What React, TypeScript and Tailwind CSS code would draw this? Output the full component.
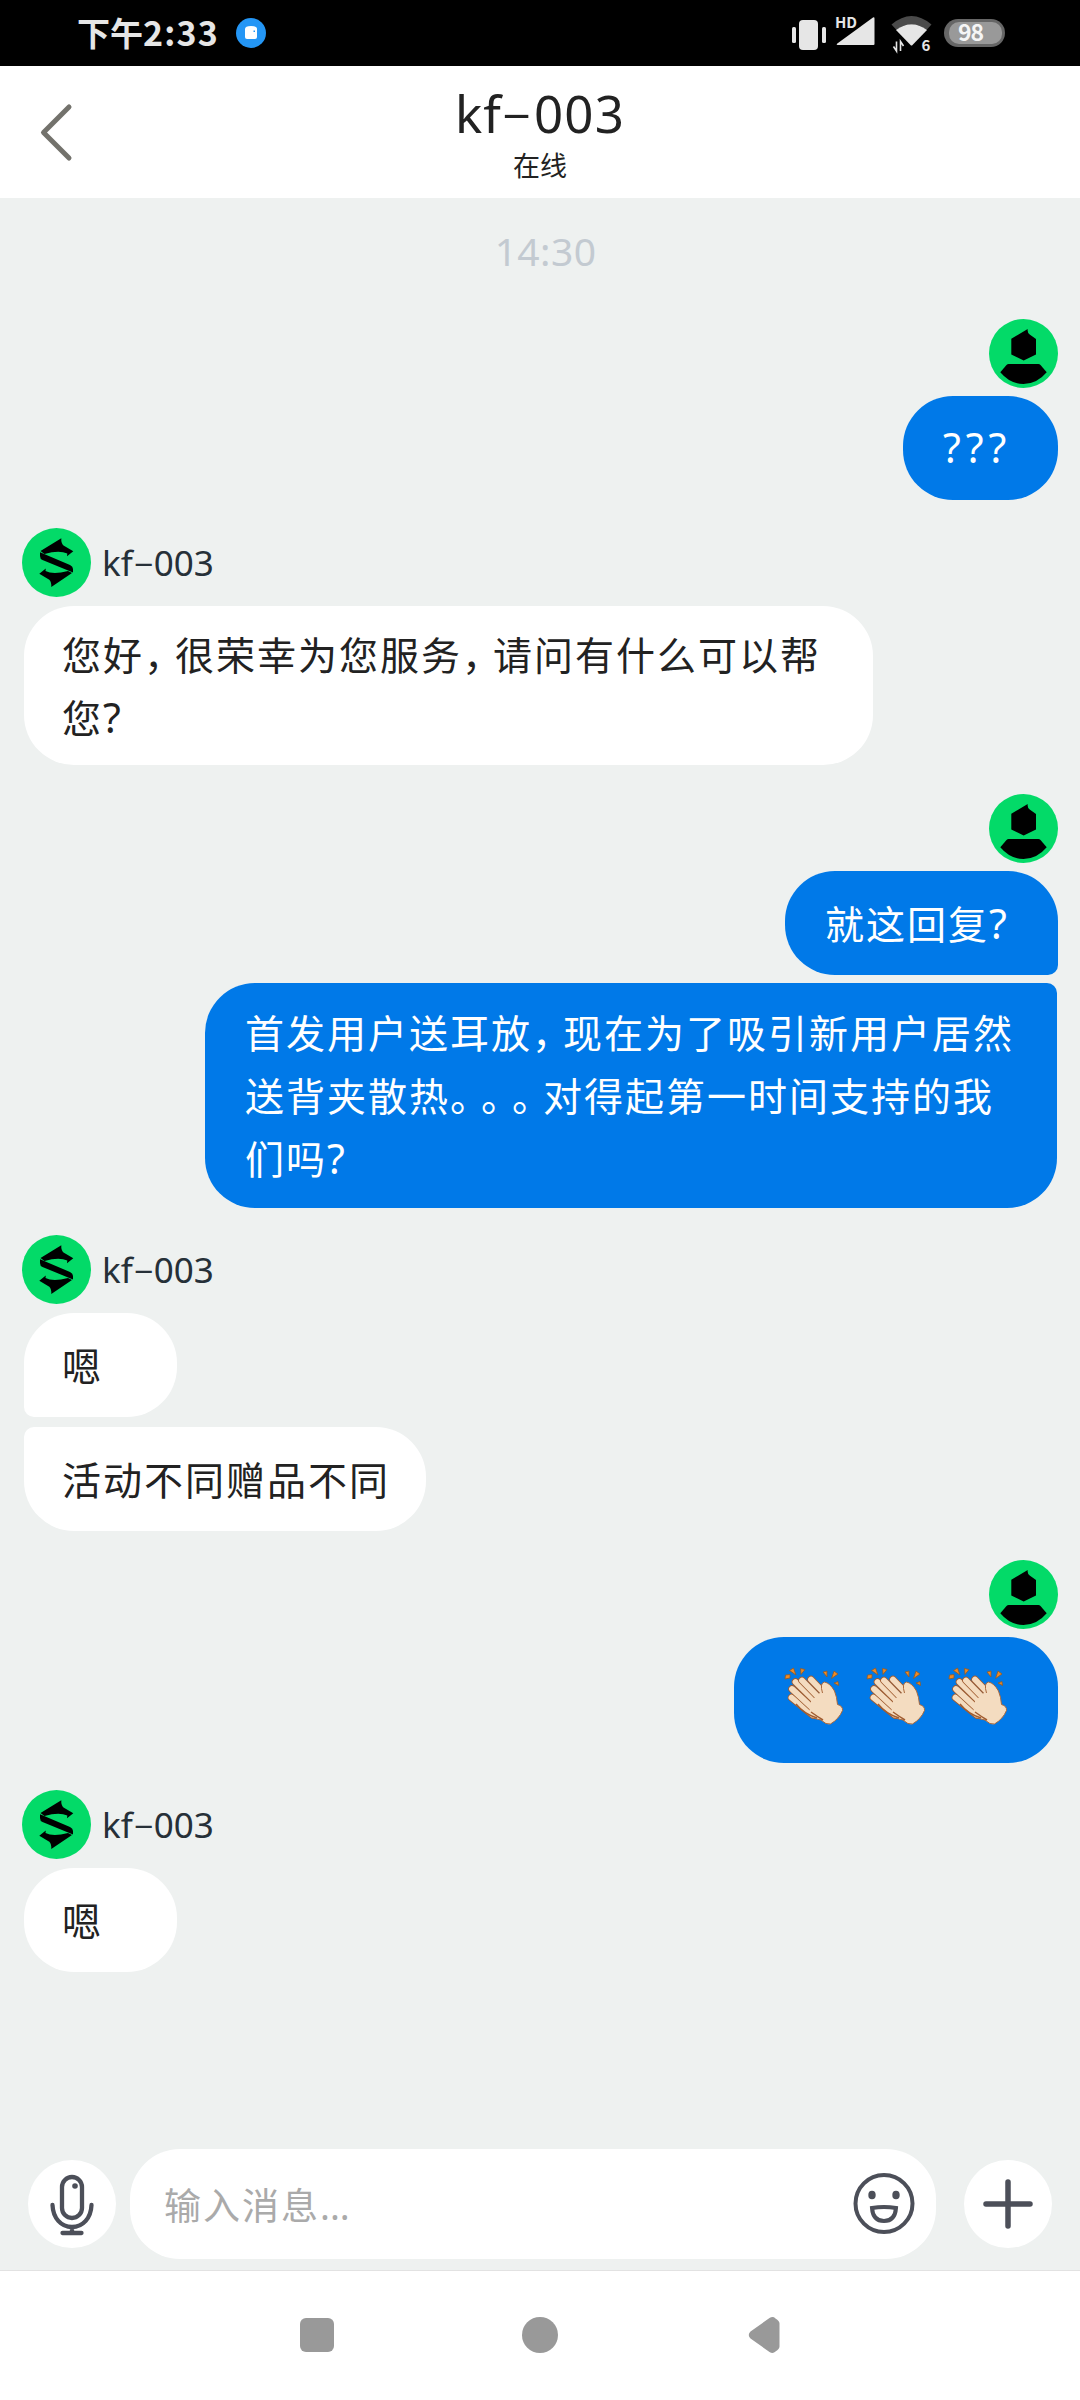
import type { ReactNode } from "react"
import clsx from "clsx"

const FONT = "font-['Noto_Sans_CJK_SC',sans-serif]"

function StatusBar() {
  return (
    <div className="flex h-[66px] items-center bg-black pl-[77px] pr-[74px] text-[#e6e6e6]">
      <span className="text-[33px] font-bold leading-none whitespace-nowrap -translate-y-px">
        下午<span className="text-[34px] tracking-[1.2px]">2:33</span>
      </span>
      <svg className="ml-[17px]" width="30" height="30" viewBox="0 0 30 30">
        <circle cx="15" cy="15" r="15" fill="#2496f5" />
        <path d="M9 11q0-3 6-3t6 3v8q0 2-2 2h-8q-2 0-2-2z" fill="#fff" />
        <rect x="17.5" y="12.5" width="1.5" height="1.5" fill="#2496f5" />
      </svg>
      <svg className="ml-auto" width="216" height="60" viewBox="0 -10 216 60">
        <g fill="#e6e6e6">
          <rect x="2" y="14" width="4" height="16" rx="1.5" />
          <rect x="9" y="7" width="19" height="30" rx="4" />
          <rect x="32" y="14" width="4" height="16" rx="1.5" />
          <path d="M84.500 5.500V31q0 1-1 1H47.500q-1.500 0-.5-1.200L83 4.500q1.500-.8 1.500 1z" />
        </g>
        <text x="45" y="15" fontSize="15" fontWeight="600" fill="#e6e6e6" stroke="#000" strokeWidth="2" paintOrder="stroke">HD</text>
        <path d="M101.500 11.500Q121.500-5.500 141.500 11.500L136.500 17Q121.500 5 106.500 17z" fill="#4a4a4a" />
        <path d="M106 17Q121.500 5.500 137 17L122.500 32q-1 1-2 0z" fill="#e6e6e6" />
        <path d="M106.500 28.500v9.500l-3-4.500M110.500 38V28.500l3 4.500" fill="none" stroke="#e6e6e6" strokeWidth="1.600" />
        <text x="131.500" y="38" fontSize="15" fontWeight="700" fill="#e6e6e6" stroke="#000" strokeWidth="2" paintOrder="stroke">6</text>
        <rect x="154" y="6" width="61" height="28" rx="14" fill="#666" />
        <rect x="159" y="9" width="53" height="22" rx="10" fill="#999" />
        <text x="168" y="28" fontSize="23" fontWeight="700" fill="#f5f5f5" textLength="26">98</text>
      </svg>
    </div>
  )
}

function Name({ className }: { className: string }) {
  return (
    <span className={clsx("whitespace-nowrap leading-none font-['Noto_Sans','Noto_Sans_CJK_SC',sans-serif]", className)}>
      kf<span className="mx-[0.14em] inline-block -translate-y-[0.05em] scale-x-[1.9] scale-y-[0.8]">-</span>003
    </span>
  )
}

function Header() {
  return (
    <header className="flex h-[132px] items-center bg-white px-[39px] text-[#222]">
      <svg className="mt-[-1px]" width="36" height="60" viewBox="0 0 36 60">
        <path d="M30 5L4.500 30.500L30 56" fill="none" stroke="#73726c" strokeWidth="5" strokeLinecap="round" strokeLinejoin="round" />
      </svg>
      <div className="flex flex-1 flex-col items-center pr-[36px] pt-[4px]">
        <Name className="text-[51px] tracking-[1.2px]" />
        <span className="mt-[11px] text-[27px] leading-[30px]">在线</span>
      </div>
    </header>
  )
}

function UserAvatar() {
  return (
    <svg className="self-end" width="69" height="69" viewBox="0 0 69 69">
      <circle cx="34.500" cy="34.500" r="34.500" fill="#03da68" />
      <path d="M22.300 19.700L38.700 10q-.5 3.500 2 5.500L47 20v15.500l-12.300 6-12.400-6z" />
      <path d="M19.500 45H49.500q1 0 2 1l6.200 7.300Q48 65 34.500 65T11.300 53.300L17.500 46q1-1 2-1z" />
    </svg>
  )
}

function AgentAvatar() {
  return (
    <svg width="69" height="69" viewBox="0 0 69 69">
      <circle cx="34.500" cy="34.500" r="34.500" fill="#03da68" />
      <path d="M18.500 23L39.300 10.300q-.3 5 2.200 7.200l9.800 5.800L45 28.200l.3-2.700Q37 22 22.500 26z" />
      <path d="M18 24.300L48 37q3 1.500 3 4v3.500L20.500 32q-2.500-1-2.500-4z" />
      <path d="M17.300 45.700l6.500-5.200-.3 2.500Q31 47 46 43l4 2L29.300 59q.3-5-2-7.200z" />
    </svg>
  )
}

// fingers from the back of the hand to the front
const FINGERS = [
  "M7.500 31.500L29 49",
  "M8 23L34 47",
  "M11.500 16L37 41",
  "M18 14.500L40 37",
  "M27 13.500L44 31",
]

function Clap() {
  return (
    <svg width="60" height="61" viewBox="0 0 60 61" role="img" aria-label="👏🏻">
      <g fill="#f08a24" stroke="#8a5a2c" strokeWidth="0.800">
        <path d="M5.500 4.500L9.500 2l2.500 7zM1.500 9l4.500-.500v3.500L1 13zM16.500 2.500l4.500 1-4 5zM39 6l4-1v6zM50 5l4 3-6.500 4.500zM50 17l4-1.500.500 4z" />
      </g>
      <g strokeLinecap="round">
        {FINGERS.map((d) => (
          <g key={d}>
            <path d={d} stroke="#a05c30" strokeWidth="7.500" />
            <path d={d} stroke="#f4dcc0" strokeWidth="5.800" />
          </g>
        ))}
      </g>
      <path
        d="M27 35L38 25Q36 17 40.500 16Q46 17 50.500 25Q53 31 53.500 38.500Q59 40 58.500 44.500Q55 53 46.500 58Q42 59 37 54Q29 53 25 48z"
        fill="#f4dcc0"
      />
      <path d="M38.500 27Q35.500 17 40.500 16Q46 17 50.500 25Q53 31 53.500 38.500Q59 40 58.500 44.500Q55 53 46.500 58Q42 59 37 54Q33 53 28 52" fill="none" stroke="#a9683c" strokeWidth="1" />
      <path d="M12 38Q20 48 33 52M27 46Q34 51 39 54" fill="none" stroke="#a05c30" strokeWidth="1.500" />
    </svg>
  )
}

function Bubble({ own, className, children }: { own?: boolean; className?: string; children: ReactNode }) {
  return (
    <div
      className={clsx(
        "flex flex-col items-start justify-center whitespace-nowrap rounded-[50px] pb-[2px] text-[39px] leading-[63px] tracking-[2px] [text-spacing-trim:space-all]",
        own ? "self-end bg-[#0079e8] pl-[40px] text-white" : "ml-[2px] self-start bg-white pl-[38px] text-[#222]",
        className,
      )}
    >
      {children}
    </div>
  )
}

// full-width punctuation set tighter than the ideographs
function Mark({ children }: { children: string }) {
  return <span className="tracking-[-8px]">{children}</span>
}

function Question({ children = "?" }: { children?: string }) {
  return <span className="font-['Noto_Sans',sans-serif] text-[41px] leading-none tracking-[5px]">{children}</span>
}

function AgentRow() {
  return (
    <div className="mb-[9px] flex items-center gap-[11px]">
      <AgentAvatar />
      <Name className="text-[35px] text-[#263038]" />
    </div>
  )
}

function InputBar() {
  return (
    <div className="flex h-[110px] items-center pl-[28px] pr-[28px]">
      <div className="flex size-[88px] items-center justify-center rounded-full bg-white">
        <svg width="48" height="64" viewBox="0 0 48 64" fill="none" stroke="#4c4f59" strokeWidth="4.300" strokeLinecap="round">
          <rect x="14" y="5" width="20" height="41" rx="10" />
          <circle cx="27" cy="14" r="2.800" fill="#4c4f59" stroke="none" />
          <path d="M4.500 33C5 46 13 55 24 55S43 46 43.500 33M24 55v6M14.500 61h19" />
        </svg>
      </div>
      <div className="ml-[14px] flex h-[110px] w-[806px] items-center justify-between rounded-[50px] bg-white pl-[34px] pr-[21px]">
        <span className="mt-[2px] text-[37px] leading-none tracking-[2px] text-[#aaa]">
          输入消息<span className="font-['Noto_Sans',sans-serif] tracking-[0px]">...</span>
        </span>
        <svg width="62" height="64" viewBox="0 0 62 64" fill="none" stroke="#4c4f59" strokeWidth="4">
          <circle cx="31" cy="31.500" r="28.500" />
          <ellipse cx="19" cy="23" rx="3.700" ry="4.300" fill="#4c4f59" stroke="none" />
          <ellipse cx="43" cy="23" rx="3.700" ry="4.300" fill="#4c4f59" stroke="none" />
          <path d="M19 36Q31 34 43 36Q42 49 31 49T19 36z" />
        </svg>
      </div>
      <div className="ml-[28px] flex size-[88px] items-center justify-center rounded-full bg-white">
        <svg width="52" height="52" viewBox="0 0 52 52" stroke="#4c4f59" strokeWidth="5.500" strokeLinecap="round">
          <path d="M26 4v44M4 26h44" />
        </svg>
      </div>
    </div>
  )
}

function NavBar() {
  return (
    <div className="flex h-[130px] items-center border-t border-[#e2e2e2] bg-white pb-[2px] pl-[300px] text-[#999]">
      <div className="size-[34px] rounded-[6px] bg-[#999]" />
      <div className="ml-[188px] size-[36px] rounded-full bg-[#999]" />
      <svg className="ml-[190px]" width="34" height="38" viewBox="0 0 34 38">
        <path d="M2.500 15.500L21.500 2q3.500-2 6 .5 4 2.500 4 5v23q0 2.500-4 5-2.500 2.500-6 .5L2.500 22.500q-3.500-3.500 0-7z" fill="currentColor" />
      </svg>
    </div>
  )
}

export default function App() {
  return (
    <div className={clsx("flex h-[2400px] w-[1080px] flex-col bg-[#eef1f0]", FONT)}>
      <StatusBar />
      <Header />
      <main className="flex flex-1 flex-col px-[22px]">
        <div className="flex h-[121px] items-center justify-center pb-[14px] pl-[11px] font-['Noto_Sans',sans-serif] text-[39px] tracking-[0.4px] text-[#c3cad1]">
          14:30
        </div>

        <UserAvatar />
        <Bubble own className="mt-[8px] h-[104px] w-[155px]">
          <Question>???</Question>
        </Bubble>

        <div className="mt-[28px] flex flex-col">
          <AgentRow />
          <Bubble className="h-[159px] w-[849px]">
            <div>您好<Mark>，</Mark>很荣幸为您服务<Mark>，</Mark>请问有什么可以帮</div>
            <div>您<Question /></div>
          </Bubble>
        </div>

        <div className="mt-[29px] flex flex-col">
          <UserAvatar />
          <Bubble own className="mt-[8px] h-[104px] w-[273px] rounded-br-[10px]">
            <div>就这回复<Question /></div>
          </Bubble>
          <Bubble own className="mt-[8px] mr-px h-[225px] w-[852px] rounded-tr-[10px]">
            <div>首发用户送耳放<Mark>，</Mark>现在为了吸引新用户居然</div>
            <div>送背夹散热<Mark>。。。</Mark>对得起第一时间支持的我</div>
            <div>们吗<Question /></div>
          </Bubble>
        </div>

        <div className="mt-[27px] flex flex-col">
          <AgentRow />
          <Bubble className="h-[104px] w-[153px] rounded-bl-[10px]">嗯</Bubble>
          <Bubble className="mt-[10px] h-[104px] w-[402px] rounded-tl-[10px]">活动不同赠品不同</Bubble>
        </div>

        <div className="mt-[29px] flex flex-col">
          <UserAvatar />
          <Bubble own className="mt-[8px] h-[126px] w-[324px]">
            <div className="mb-[6px] ml-[10px] flex gap-[22px]">
              <Clap />
              <Clap />
              <Clap />
            </div>
          </Bubble>
        </div>

        <div className="mt-[27px] flex flex-col">
          <AgentRow />
          <Bubble className="h-[104px] w-[153px]">嗯</Bubble>
        </div>
      </main>
      <div className="pb-[11px]">
        <InputBar />
      </div>
      <NavBar />
    </div>
  )
}
